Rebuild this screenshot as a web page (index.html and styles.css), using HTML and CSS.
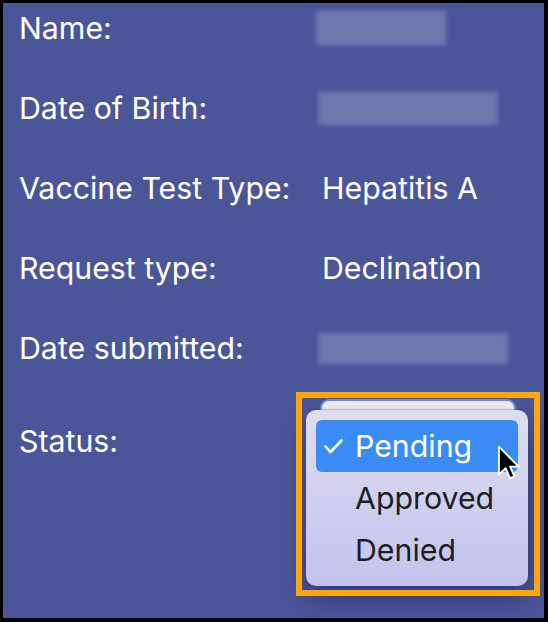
FILE: index.html
```html
<!DOCTYPE html>
<html>
<head>
<meta charset="utf-8">
<link rel="stylesheet" href="styles.css">
</head>
<body>
<div class="frame">
  <div class="rows">
    <div class="row">
      <div class="label">Name:</div>
      <div class="value"><div class="blur blur-name"></div></div>
    </div>
    <div class="row">
      <div class="label">Date of Birth:</div>
      <div class="value"><div class="blur blur-dob"></div></div>
    </div>
    <div class="row">
      <div class="label">Vaccine Test Type:</div>
      <div class="value">Hepatitis A</div>
    </div>
    <div class="row">
      <div class="label">Request type:</div>
      <div class="value">Declination</div>
    </div>
    <div class="row">
      <div class="label">Date submitted:</div>
      <div class="value"><div class="blur blur-sub"></div></div>
    </div>
    <div class="row row-status">
      <div class="label">Status:</div>
      <div class="value value-status">
        <div class="select"></div>
        <div class="popup">
          <div class="item item-active">
            <span class="check"><svg viewBox="0 0 19 15" width="19" height="15"><polyline points="1.5,7.5 6.5,13 17.5,1.5" fill="none" stroke="#fff" stroke-width="2.6" stroke-linecap="round" stroke-linejoin="round"/></svg></span>
            <span>Pending</span>
          </div>
          <div class="item"><span class="check"></span><span>Approved</span></div>
          <div class="item"><span class="check"></span><span>Denied</span></div>
        </div>
        <svg class="cursor" viewBox="0 0 14 22" width="24" height="37">
          <path d="M1 1 L1 17.5 L5 13.8 L7.6 19.8 L10.2 18.7 L7.7 12.9 L12.8 12.9 Z" fill="#000" stroke="#fff" stroke-width="1.1" stroke-linejoin="round"/>
        </svg>
      </div>
    </div>
  </div>
  <div class="highlight-box"></div>
</div>
</body>
</html>
```
FILE: styles.css
```css
html, body {
  margin: 0;
  padding: 0;
  background: #000;
}
.frame {
  position: relative;
  width: 548px;
  height: 622px;
  box-sizing: border-box;
  border-style: solid;
  border-color: #000;
  border-width: 3px 4px 4px 3px;
  background: #4b5699;
  overflow: hidden;
  font-family: Inter, "Liberation Sans", sans-serif;
  color: #fff;
  font-size: 30.3px;
}
.rows {
  display: flex;
  flex-direction: column;
  gap: 46px;
  padding: 8px 0 0 16px;
}
.row {
  display: grid;
  grid-template-columns: 303px 1fr;
  height: 34px;
  align-items: center;
  line-height: 34px;
}
.row-status {
  margin-top: 13px;
}
.label, .value {
  white-space: nowrap;
}
.value {
  position: relative;
}
.blur {
  background: rgba(165, 165, 205, 0.42);
  filter: blur(2px);
}
.blur-name {
  width: 130px;
  height: 34px;
  margin-left: -6px;
}
.blur-dob {
  width: 180px;
  height: 33px;
  margin-left: -4px;
}
.blur-sub {
  width: 190px;
  height: 31px;
  margin-left: -4px;
}
.value-status {
  height: 34px;
}
.select {
  position: absolute;
  left: 0;
  top: -23px;
  width: 192px;
  height: 40px;
  border-radius: 7px;
  background: #f4f4f8;
  box-shadow: 0 0 0 2px #6f8fe0;
}
.popup {
  position: absolute;
  left: -16px;
  top: -14px;
  width: 222px;
  box-sizing: border-box;
  padding: 10px;
  border-radius: 10px;
  background: linear-gradient(to bottom, #dedeed 0%, #d0d0ee 50%, #c3c3ee 100%);
  box-shadow: 0 0 0 1px rgba(60, 60, 100, 0.25), 0 12px 28px rgba(20, 20, 60, 0.45);
  color: #1d1d22;
}
.item {
  display: flex;
  align-items: center;
  height: 52px;
  border-radius: 6px;
  font-size: 30.3px;
}
.item-active {
  background: #3a8bf6;
  color: #fff;
}
.check {
  display: flex;
  align-items: center;
  width: 39px;
  padding-left: 8px;
  box-sizing: border-box;
  height: 100%;
}
.cursor {
  position: absolute;
  left: 175px;
  top: 21px;
}
.highlight-box {
  position: absolute;
  left: 293px;
  top: 389px;
  width: 244px;
  height: 204px;
  box-sizing: border-box;
  border: 6px solid #ffa60f;
  pointer-events: none;
}
```
